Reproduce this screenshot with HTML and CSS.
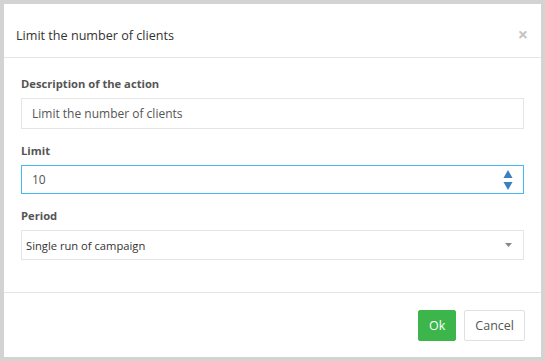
FILE: index.html
```html
<!DOCTYPE html>
<html lang="en">
<head>
    <meta charset="UTF-8">
    <title>Limit the number of clients</title>
    <link rel="stylesheet" href="styles.css">
</head>
<body>
    <div class="modal">
        <div class="modal-header">
            <h4 class="modal-title">Limit the number of clients</h4>
            <span class="close">&times;</span>
        </div>
        <div class="modal-body">
            <div class="form-group">
                <label>Description of the action</label>
                <input class="form-control" type="text" value="Limit the number of clients">
            </div>
            <div class="form-group">
                <label>Limit</label>
                <div class="number-field">
                    <span class="number-value">10</span>
                    <svg class="spinner" width="10" height="22" viewBox="0 0 10 22">
                        <polygon points="5,1 9.5,9 0.5,9" fill="#3a7fc0"/>
                        <polygon points="0.5,13 9.5,13 5,21" fill="#3a7fc0"/>
                    </svg>
                </div>
            </div>
            <div class="form-group">
                <label>Period</label>
                <div class="select">
                    <span>Single run of campaign</span>
                    <svg width="7" height="4" viewBox="0 0 7 4"><polygon points="0,0 7,0 3.5,4" fill="#888"/></svg>
                </div>
            </div>
        </div>
        <div class="modal-footer">
            <button class="btn btn-ok">Ok</button>
            <button class="btn btn-cancel">Cancel</button>
        </div>
    </div>
</body>
</html>
```

FILE: styles.css
```css
body {
    margin: 0;
    padding: 4px;
    background-color: #d3d3d3;
    font-family: "Open Sans", sans-serif;
}

.modal {
    background-color: #fff;
    height: 353px;
    display: flex;
    flex-direction: column;
}

.modal-header {
    height: 54px;
    border-bottom: 1px solid #e5e5e5;
    display: flex;
    align-items: center;
    padding: 9px 13px 0 12px;
    box-sizing: border-box;
}

.modal-title {
    margin: 0;
    flex: 1;
    font-size: 12.6px;
    font-weight: normal;
    color: #333;
}

.close {
    color: #c4c4c4;
    font-size: 18px;
    line-height: 1;
    font-weight: bold;
    margin-top: -2px;
}

.modal-body {
    padding: 17px;
    flex: 1;
}

.form-group {
    margin-bottom: 13px;
}

label {
    display: block;
    font-size: 11.2px;
    font-weight: bold;
    color: #555;
    line-height: 17px;
    margin-bottom: 6px;
}

.form-control {
    display: block;
    width: 100%;
    box-sizing: border-box;
    height: 31px;
    padding: 0 10px;
    border: 1px solid #e5e5e5;
    font-family: "Open Sans", sans-serif;
    font-size: 12px;
    color: #555;
    outline: none;
}

.number-field {
    height: 29px;
    box-sizing: border-box;
    border: 1px solid #42b9f5;
    display: flex;
    align-items: center;
    justify-content: space-between;
    padding: 0 10px;
    font-size: 12px;
    color: #555;
}

.select {
    height: 30px;
    box-sizing: border-box;
    border: 1px solid #e5e5e5;
    display: flex;
    align-items: center;
    justify-content: space-between;
    padding: 0 11px 0 4px;
    font-size: 11.2px;
    color: #333;
}

.modal-footer {
    border-top: 1px solid #e5e5e5;
    height: 65px;
    box-sizing: border-box;
    display: flex;
    justify-content: flex-end;
    align-items: center;
    gap: 8px;
    padding: 0 16px 0 0;
}

.btn {
    height: 31px;
    font-family: "Open Sans", sans-serif;
    font-size: 12.5px;
    border-radius: 2px;
    padding: 0 10px;
    cursor: pointer;
}

.btn-ok {
    background-color: #3cb54a;
    border: 1px solid #3cb54a;
    color: #fff;
}

.btn-cancel {
    background-color: #fff;
    border: 1px solid #e0e0e0;
    color: #555;
}
```
